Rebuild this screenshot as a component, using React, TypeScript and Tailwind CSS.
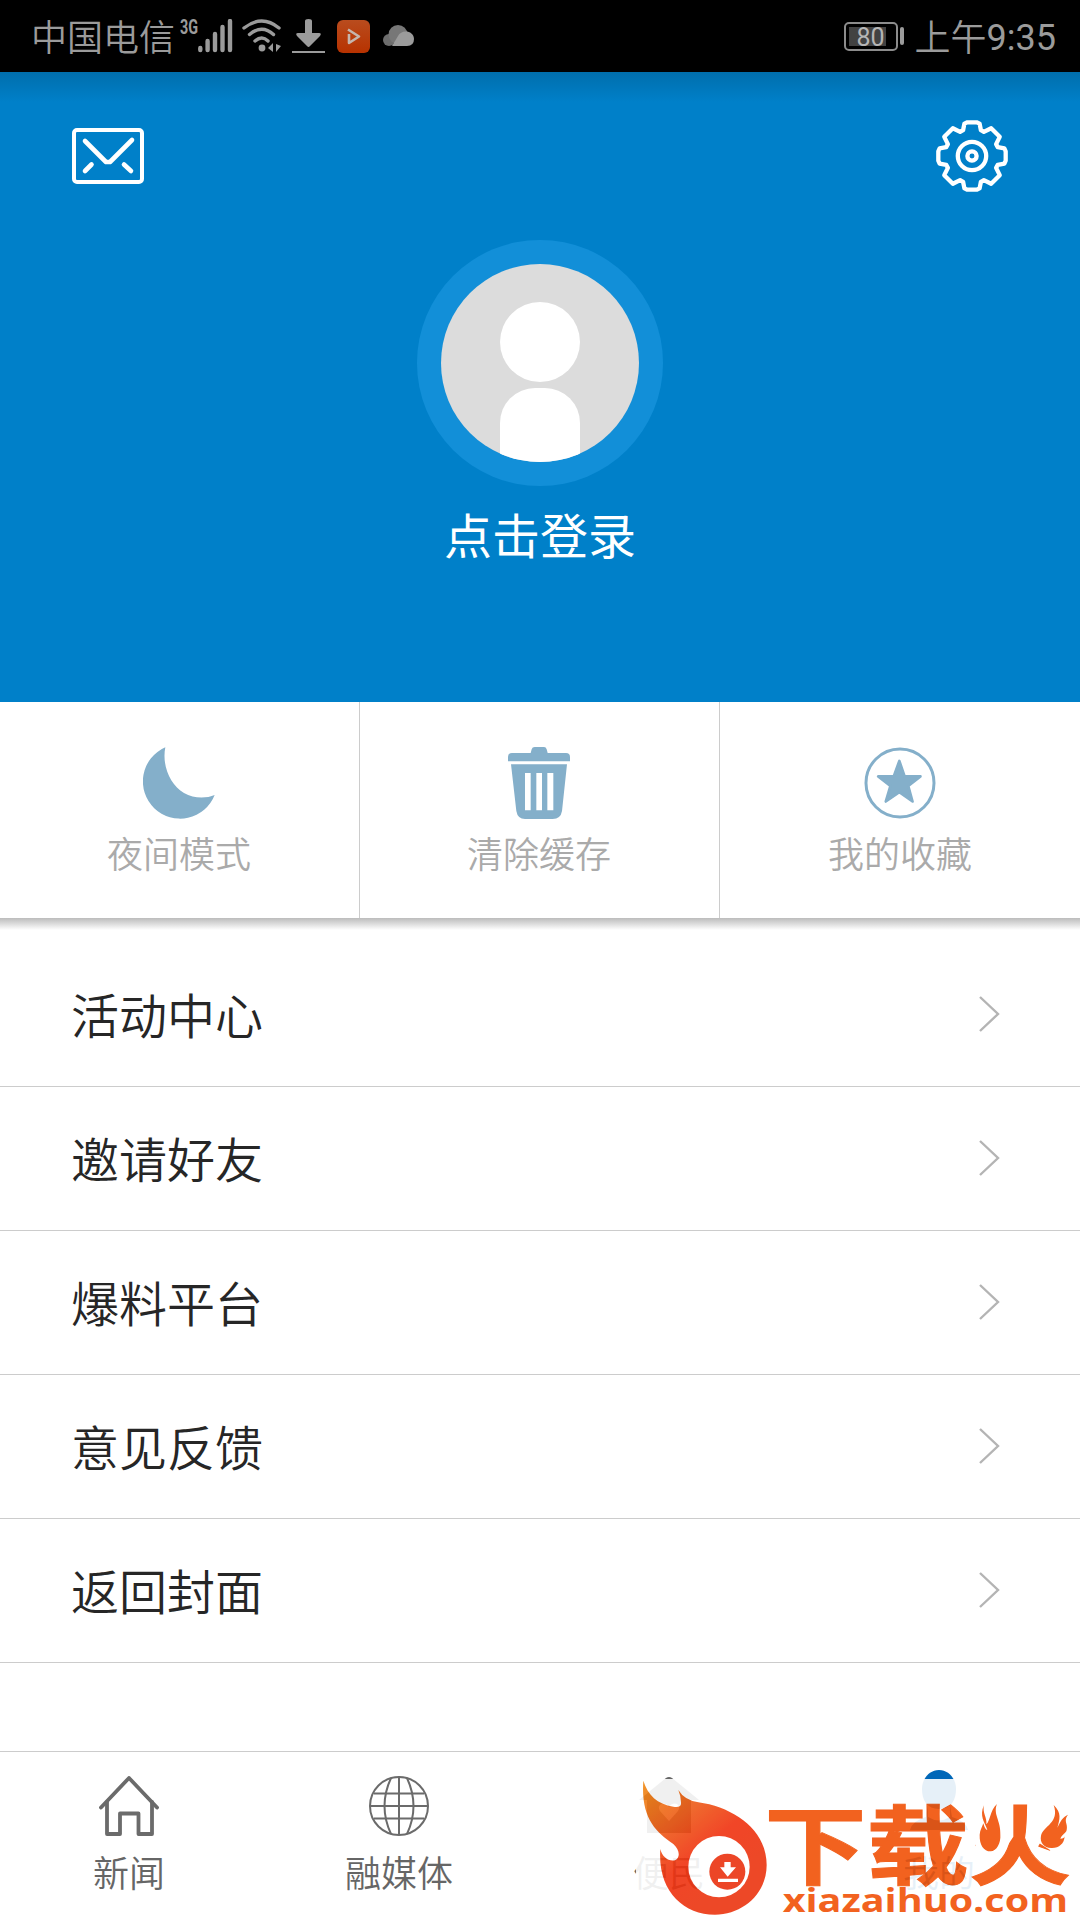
import type { ReactNode } from 'react'

interface Tile {
  label: string
  icon: ReactNode
}

interface Tab {
  label: string
  icon: ReactNode
  active?: boolean
}

const MENU = ['活动中心', '邀请好友', '爆料平台', '意见反馈', '返回封面']

const TILES: Tile[] = [
  { label: '夜间模式', icon: <MoonIcon /> },
  { label: '清除缓存', icon: <TrashIcon /> },
  { label: '我的收藏', icon: <StarIcon /> },
]

const TABS: Tab[] = [
  { label: '新闻', icon: <HomeIcon /> },
  { label: '融媒体', icon: <GlobeIcon /> },
  { label: '便民', icon: <ServiceIcon /> },
  { label: '我的', icon: <ProfileIcon />, active: true },
]

function MoonIcon() {
  return (
    <svg className="w-[72px] h-[72px] fill-[#84afca]" viewBox="158 170 216 216">
      <path d="M225 171C214 227 240 283 281 308C310 325 347 325 373 314A111.500 111.500 0 1 1 225 171Z" />
    </svg>
  )
}

function TrashIcon() {
  return (
    <svg className="w-[72px] h-[72px] fill-[#84afca]" viewBox="189 170 216 216">
      <path d="M204 213V200Q204 188 216 188H272L275 177Q277 170 284 170H312Q318 170 320 177L323 188H378Q390 188 390 200V213Z" />
      <path
        fillRule="evenodd"
        d="M213 222H381L366 362Q362 386 338 386H255Q233 386 229 362ZM255 248V360H272V248ZM289 248V360H306V248ZM322 248V360H340V248Z"
      />
    </svg>
  )
}

function StarIcon() {
  return (
    <svg className="w-[72px] h-[72px]" viewBox="192 170 216 218">
      <circle cx="300" cy="279" r="103" fill="none" stroke="#84afca" strokeWidth="9" />
      <path
        d="M298 212L314 259H362L325 288L338 335L298 307L257 335L271 288L234 259H281Z"
        fill="#84afca"
        stroke="#84afca"
        strokeWidth="8"
        strokeLinejoin="round"
      />
    </svg>
  )
}

function HomeIcon() {
  return (
    <svg className="w-[60px] h-[60px]" viewBox="0 0 60 60" fill="none" stroke="#6b6b6b" strokeWidth="3.800" strokeLinecap="round" strokeLinejoin="round">
      <path d="M2 31.500L30 2L58 31.500" />
      <path d="M8 26V58H21V37.500H39.500V58H53V26" />
    </svg>
  )
}

function GlobeIcon() {
  return (
    <svg className="w-[60px] h-[60px]" viewBox="0 0 60 60" fill="none" stroke="#6b6b6b" strokeWidth="2">
      <circle cx="30" cy="30" r="29" />
      <path d="M30 1V59M1 30H59M5 17.500H55M5 42.500H55" />
      <path d="M22 2Q9 30 22 58M38 2Q51 30 38 58" />
    </svg>
  )
}

function ServiceIcon() {
  return (
    <svg className="w-[60px] h-[60px]" viewBox="0 0 60 60" fill="#666">
      <path
        fillRule="evenodd"
        d="M27 2Q30 0 33 2L60 24H52V57H8V24H0ZM30 45L21 35C17 29 25 24 30 31C35 24 43 29 39 35Z"
      />
    </svg>
  )
}

function ProfileIcon() {
  return (
    <svg className="w-[60px] h-[60px] overflow-visible" viewBox="0 0 60 60" fill="#0067b8">
      <path d="M13 13C13 3 20 -6 30 -6S47 3 47 13C47 24 42 33 30 33S13 24 13 13Z" />
      <path d="M19 29V41Q30 48 41 41V29L43 41Q57 45 59 54H1Q3 45 17 41Z" />
    </svg>
  )
}

function SignalIcon() {
  return (
    <svg className="w-[35px] h-[34px]" viewBox="0 0 35 34" stroke="#9b9b9b" strokeWidth="4.400" strokeLinecap="round">
      <path d="M2.300 29V31M9.600 22V31M17 15V31M24.500 8V31M32 2V31" />
    </svg>
  )
}

function WifiIcon() {
  return (
    <svg className="w-[40px] h-[34px]" viewBox="0 0 40 34" fill="none" stroke="#9b9b9b" strokeWidth="3.400" strokeLinecap="round">
      <path d="M2 9Q20 -5 37 9M7.500 15.500Q20 5 31.500 15.500M13 22Q20 16 26 22" />
      <circle cx="20" cy="29" r="3.400" fill="#9b9b9b" stroke="none" />
      <path d="M31 24V33L26 29ZM34 33V25L39 27Z" fill="#9b9b9b" stroke="none" />
    </svg>
  )
}

function StatusBar() {
  return (
    <div className="h-[72px] shrink-0 bg-black flex items-center justify-between pl-[31px] pr-6 text-[#9b9b9b]">
      <div className="flex items-center">
        <span className="text-[36px] leading-[44px] font-[350] -mt-0.5">中国电信</span>
        <span className="self-start ml-[5px] mt-0.5 w-[18px] text-[20px] leading-[20px] font-bold [font-family:'Roboto',sans-serif]">
          <span className="inline-block origin-left scale-x-[0.72]">3G</span>
        </span>
        <SignalIcon />
        <div className="ml-[9px]">
          <WifiIcon />
        </div>
        <svg className="ml-[10px] w-[34px] h-[34px]" viewBox="0 0 34 34" fill="#9b9b9b">
          <path d="M13 2Q13 0 16.500 0T20 2V14H27Q30 14 28 17L18 27Q16.500 29 15 27L5 17Q3 14 6 14H13Z" />
          <rect x="0" y="32" width="33" height="2" />
        </svg>
        <svg className="ml-[11px] w-[33px] h-[33px]" viewBox="0 0 33 33">
          <defs>
            <linearGradient id="video" x2="0" y2="1">
              <stop stopColor="#b94c1e" />
              <stop offset="1" stopColor="#b73200" />
            </linearGradient>
          </defs>
          <rect width="33" height="33" rx="6" fill="url(#video)" />
          <path d="M12 14V23L22 16.500L11 9.500" fill="none" stroke="#c5b6ae" strokeWidth="2.600" strokeLinejoin="round" />
        </svg>
        <svg className="ml-[13px] w-[32px] h-[22px]" viewBox="0 0 32 22">
          <circle cx="6" cy="15" r="6" fill="#6d6d6d" />
          <circle cx="15" cy="9.500" r="9.500" fill="#777" />
          <path d="M9 21L15 11C18 4 31 5 31 14Q31 21 24 21Z" fill="#9b9b9b" />
        </svg>
      </div>
      <div className="flex items-center">
        <div className="w-[54px] h-[29px] rounded-[5px] border-2 border-[#8c8c8c] p-[3px]">
          <div className="w-[37px] h-full bg-[#424242] pl-[8px] text-[25px] leading-[21px] text-[#b5b5b5] [font-family:'Roboto',sans-serif]">80</div>
        </div>
        <div className="ml-0.5 w-1 h-[18px] rounded-full bg-[#9b9b9b]" />
        <span className="ml-[11px] text-[36px] leading-[44px] font-[350] -mt-0.5">上午</span>
        <span className="text-[36px] leading-[44px] mt-[3px] [font-family:'Roboto',sans-serif]">9:35</span>
      </div>
    </div>
  )
}

function MailIcon() {
  return (
    <svg className="w-[72px] h-[56px]" viewBox="0 0 72 56" fill="none" stroke="#fff" strokeLinecap="round" strokeLinejoin="round">
      <rect x="2" y="2" width="68" height="52" rx="3" strokeWidth="4" />
      <path d="M13 13L34 34H38L60 12" strokeWidth="4.600" />
      <path d="M19.500 36.500L13 43M52 36.500L59 43" strokeWidth="4.600" />
    </svg>
  )
}

function GearIcon() {
  return (
    <svg className="w-[72px] h-[72px]" viewBox="-109 -109 218 218" fill="none" stroke="#fff" strokeWidth="13" strokeLinejoin="round">
      <path d="M14 -102L23 -98L27 -78L36 -73L58 -84L84 -58L73 -36L78 -27L98 -23L102 -14V14L98 23L78 27L73 36L84 58L58 84L36 73L27 78L23 98L14 102H-14L-23 98L-27 78L-36 73L-58 84L-84 58L-73 36L-78 27L-98 23L-102 14V-14L-98 -23L-78 -27L-73 -36L-84 -58L-58 -84L-36 -73L-27 -78L-23 -98L-14 -102Z" />
      <circle r="43" />
      <circle r="14" />
    </svg>
  )
}

function Avatar() {
  return (
    <div className="w-[246px] h-[246px] rounded-full bg-[#128fd8] p-6">
      <div className="w-[198px] h-[198px] rounded-full bg-[#dcdcdc] overflow-hidden flex flex-col items-center pt-[38px]">
        <div className="w-20 h-20 shrink-0 rounded-full bg-white" />
        <div className="mt-1.5 w-20 h-20 shrink-0 rounded-t-[35px] bg-white" />
      </div>
    </div>
  )
}

function Header() {
  return (
    <header className="h-[630px] shrink-0 bg-[#0080c9] bg-[linear-gradient(#006eac,#0080c9_30px)] flex flex-col items-center text-white">
      <div className="w-full h-[168px] px-[72px] pt-12 flex justify-between items-start">
        <div className="pt-2">
          <MailIcon />
        </div>
        <GearIcon />
      </div>
      <Avatar />
      <p className="mt-[17px] text-[48px] leading-[60px]">点击登录</p>
    </header>
  )
}

// Site logo laid over the lower right corner of the tab bar
function Watermark() {
  return (
    <div className="absolute left-[636px] top-[1779px] w-[444px] h-[141px] bg-white opacity-90">
      <svg className="w-[444px] h-[141px]" viewBox="48 117 1332 423">
        <defs>
          <linearGradient id="flame" x1="0" y1="0" x2="0.600" y2="0.800">
            <stop stopColor="#f08c14" />
            <stop offset="0.400" stopColor="#ee5a18" />
            <stop offset="0.700" stopColor="#f03210" />
            <stop offset="1" stopColor="#ec3510" />
          </linearGradient>
        </defs>
        <path
          fill="url(#flame)"
          d="M70 122C83 165 112 192 160 200Q182 203 183 192Q184 171 175 150Q194 181 235 187C342 202 440 270 440 375C440 460 370 524 285 524C188 524 112 450 121 327C126 350 145 365 165 361C183 352 178 328 160 312C105 275 62 230 70 122Z"
        />
        <circle cx="297" cy="380" r="92" fill="#fff" />
        <circle cx="322" cy="395" r="54" fill="#ea3210" />
        <path d="M313 366H332V382H348L323 410L300 382H313ZM294 416H354V426H294Z" fill="#fff" />
        <g fill="#f15207">
          <text
            transform="translate(433 413) scale(1.180 1)"
            fontSize="260"
            fontWeight="700"
            fontFamily="'Noto Sans CJK SC', sans-serif"
            stroke="#f15207"
            strokeWidth="3"
          >
            下载火
          </text>
          <text x="488" y="517" textLength="856" fontSize="96" fontWeight="700" fontFamily="'Open Sans', sans-serif" lengthAdjust="spacingAndGlyphs">xiazaihuo.com</text>
        </g>
        {/* small flames take the place of the two dots of 火 */}
        <path d="M1066 185H1180V290L1150 335H1066ZM1243 185H1362V330H1290L1243 300Z" fill="#fff" />
        <path
          fill="#f15207"
          d="M1092 196C1086 218 1102 233 1099 253C1111 242 1110 211 1131 192C1118 222 1143 242 1141 284C1143 309 1130 333 1112 334C1091 334 1078 315 1079 284C1080 270 1087 260 1090 250Q1095 270 1102 270C1094 247 1077 228 1092 196Z"
        />
        <path
          fill="#f15207"
          d="M1301 195C1326 219 1319 239 1312 263C1324 239 1328 232 1344 224C1329 244 1345 250 1340 270C1338 280 1327 282 1321 296Q1333 296 1334 289C1333 312 1316 325 1294 324C1271 323 1259 307 1263 287C1270 258 1320 248 1301 195Z"
        />
      </svg>
    </div>
  )
}

export default function App() {
  return (
    <div className="relative w-[1080px] h-[1920px] overflow-hidden bg-white flex flex-col [font-family:'Noto_Sans_CJK_SC',sans-serif]">
      <StatusBar />
      <Header />

      <section className="h-[216px] shrink-0 grid grid-cols-3">
        {TILES.map(tile => (
          <div key={tile.label} className="flex flex-col items-center pt-[45px] pr-px border-r border-[#ccc] last:border-r-0 last:pr-0">
            {tile.icon}
            <span className="mt-2 text-[36px] leading-[50px] font-[350] text-[#aaa]">{tile.label}</span>
          </div>
        ))}
      </section>
      <div className="h-3 shrink-0 bg-linear-to-b from-[#bcbcbc] to-white" />

      <ul className="mt-[13px]">
        {MENU.map(item => (
          <li key={item} className="h-36 pl-[71px] pr-[80px] flex items-center justify-between border-b border-[#ccc]">
            <span className="-mt-[3px] text-[48px] leading-[60px] font-[350] text-[#262626]">{item}</span>
            <svg className="-mt-0.5 w-[22px] h-[38px]" viewBox="0 0 22 38" fill="none" stroke="#b4b4b4" strokeWidth="2.400">
              <path d="M2 2L20 19L2 36" />
            </svg>
          </li>
        ))}
      </ul>

      <nav className="mt-auto h-[169px] shrink-0 grid grid-cols-4 border-t border-[#ccc]">
        {TABS.map(tab => (
          <div key={tab.label} className="flex flex-col items-center pt-6 pr-3">
            {tab.icon}
            <span className={`mt-2.5 text-[36px] leading-[50px] font-[350] ${tab.active ? 'text-[#0067b8]' : 'text-[#666]'}`}>{tab.label}</span>
          </div>
        ))}
      </nav>
      <Watermark />
    </div>
  )
}
